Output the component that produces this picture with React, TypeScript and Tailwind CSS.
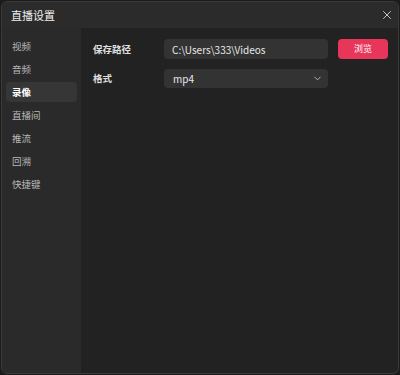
import React from 'react';
import { X, ChevronDown } from 'lucide-react';

const menu = ['视频', '音频', '录像', '直播间', '推流', '回溯', '快捷键'];

export default function App() {
  return (
    <div
      className="w-[400px] h-[375px] bg-[#1b1b1b] p-px"
      style={{ fontFamily: '"Noto Sans CJK SC", "Noto Sans", sans-serif' }}
    >
      <div className="flex h-[373px] flex-col overflow-hidden rounded-md border border-[#3a3a3a] bg-[#222222]">
        {/* Title bar */}
        <div className="flex h-[26px] shrink-0 items-center justify-between bg-[#2b2b2b] pl-[9px] pr-[4px]">
          <span className="text-[11px] text-[#f0f0f0]">直播设置</span>
          <X className="h-[14px] w-[14px] text-[#d0d0d0]" strokeWidth={1.6} />
        </div>

        <div className="flex flex-1">
          {/* Sidebar */}
          <div className="flex w-[79px] shrink-0 flex-col gap-[3px] bg-[#2a2a2a] px-[4px] pt-[8px]">
            {menu.map((item) => (
              <div
                key={item}
                className={
                  item === '录像'
                    ? 'flex h-[20px] items-center rounded-[4px] bg-[#363636] px-[6px] text-[9.5px] font-bold text-white'
                    : 'flex h-[20px] items-center px-[6px] text-[9.5px] text-[#b8b8b8]'
                }
              >
                {item}
              </div>
            ))}
          </div>

          {/* Content */}
          <div className="flex flex-1 flex-col gap-[10px] pl-[12px] pt-[11px]">
            <div className="flex items-center">
              <span className="w-[71px] text-[9.5px] font-bold text-[#e0e0e0]">保存路径</span>
              <div className="flex h-[20px] w-[164px] items-center rounded-[4px] bg-[#333333] px-[8px] text-[10px] text-[#e8e8e8]">
                C:\Users\333\Videos
              </div>
              <button className="ml-[10px] flex h-[20px] w-[50px] items-center justify-center rounded-[4px] bg-[#e8355a] text-[9px] text-white">
                浏览
              </button>
            </div>
            <div className="flex items-center">
              <span className="w-[71px] text-[9.5px] font-bold text-[#e0e0e0]">格式</span>
              <div className="flex h-[19px] w-[164px] items-center justify-between rounded-[4px] bg-[#333333] pl-[9px] pr-[5px] text-[10px] text-[#e8e8e8]">
                <span>mp4</span>
                <ChevronDown className="h-[11px] w-[11px] text-[#bbbbbb]" strokeWidth={2} />
              </div>
            </div>
          </div>
        </div>
      </div>
    </div>
  );
}
